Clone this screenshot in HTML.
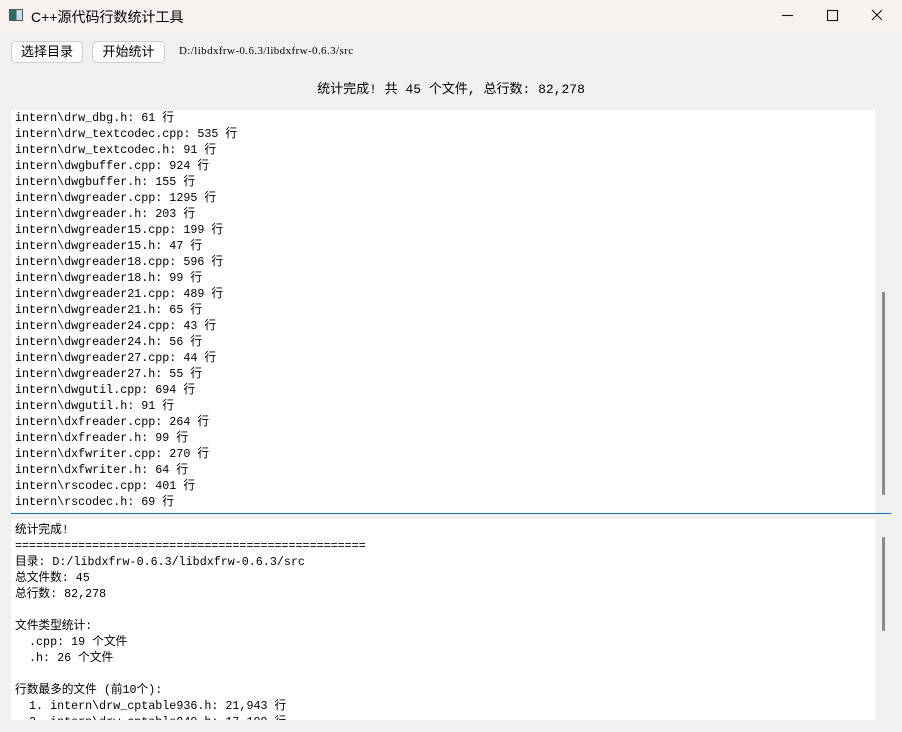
<!DOCTYPE html>
<html><head><meta charset="utf-8"><style>
*{margin:0;padding:0;box-sizing:border-box}
body{width:902px;height:732px;background:#f0f0f0;position:relative;overflow:hidden;font-family:"Liberation Sans","Noto Sans CJK SC",sans-serif;color:#000}
.title{position:absolute;left:0;top:0;width:902px;height:32px;background:#f7f1ef}
.title .t{position:absolute;left:31px;top:7px;font-size:14px}
.icon{position:absolute;left:9px;top:9px;width:14px;height:12px;border:1px solid #555;background:linear-gradient(90deg,#2d6b63 0 55%,#cde 55%)}
.btn{position:absolute;top:41px;height:22px;border:1px solid #d0d0d0;border-radius:4px;background:#fdfdfd;font-size:13px;text-align:center;line-height:20px}
.mono{font-family:"Liberation Mono","Noto Sans CJK SC",monospace;font-size:11.7px}
.box{position:absolute;left:11px;width:880px;background:#fff;overflow:hidden}
.box pre{position:absolute;left:4px;white-space:pre;line-height:16px}
.sb{position:absolute;right:0;top:0;width:16px;height:100%;background:#f0f0f0}
.th{position:absolute;left:7px;width:3px;background:#8a8a8a;border-radius:1px}
</style></head><body>
<div class="title"><div class="icon"></div><div class="t">C++源代码行数统计工具</div>
<svg style="position:absolute;left:750px;top:0" width="152" height="32" fill="none" stroke="#111" stroke-width="1.1">
<line x1="32" y1="15.5" x2="43" y2="15.5"/><rect x="77.5" y="10.5" width="10" height="10"/><path d="M122 10l10 10M132 10l-10 10"/></svg></div>
<div class="btn" style="left:11px;width:72px">选择目录</div>
<div class="btn" style="left:92px;width:73px">开始统计</div>
<div class="mono" style="position:absolute;left:179px;top:45px;font-size:11px;font-family:'Liberation Serif','DejaVu Serif',serif;letter-spacing:0.4px">D:/libdxfrw-0.6.3/libdxfrw-0.6.3/src</div>
<div class="mono" style="position:absolute;left:0;width:902px;top:78px;text-align:center;font-size:13px">统计完成! 共 45 个文件, 总行数: 82,278</div>
<div class="box" style="top:110px;height:404px">
<pre class="mono" style="top:0px">intern\drw_dbg.h: 61 行
intern\drw_textcodec.cpp: 535 行
intern\drw_textcodec.h: 91 行
intern\dwgbuffer.cpp: 924 行
intern\dwgbuffer.h: 155 行
intern\dwgreader.cpp: 1295 行
intern\dwgreader.h: 203 行
intern\dwgreader15.cpp: 199 行
intern\dwgreader15.h: 47 行
intern\dwgreader18.cpp: 596 行
intern\dwgreader18.h: 99 行
intern\dwgreader21.cpp: 489 行
intern\dwgreader21.h: 65 行
intern\dwgreader24.cpp: 43 行
intern\dwgreader24.h: 56 行
intern\dwgreader27.cpp: 44 行
intern\dwgreader27.h: 55 行
intern\dwgutil.cpp: 694 行
intern\dwgutil.h: 91 行
intern\dxfreader.cpp: 264 行
intern\dxfreader.h: 99 行
intern\dxfwriter.cpp: 270 行
intern\dxfwriter.h: 64 行
intern\rscodec.cpp: 401 行
intern\rscodec.h: 69 行</pre>
<div class="sb"><div class="th" style="top:182px;height:203px"></div></div>
<div style="position:absolute;left:0;bottom:0;width:880px;height:1px;background:#1f6fb5"></div></div>
<div class="box" style="top:519px;height:201px">
<pre class="mono" style="top:3px">统计完成!
==================================================
目录: D:/libdxfrw-0.6.3/libdxfrw-0.6.3/src
总文件数: 45
总行数: 82,278

文件类型统计:
  .cpp: 19 个文件
  .h: 26 个文件

行数最多的文件 (前10个):
  1. intern\drw_cptable936.h: 21,943 行
  2. intern\drw_cptable949.h: 17,199 行</pre>
<div class="sb"><div class="th" style="top:18px;height:94px"></div></div></div>
</body></html>
